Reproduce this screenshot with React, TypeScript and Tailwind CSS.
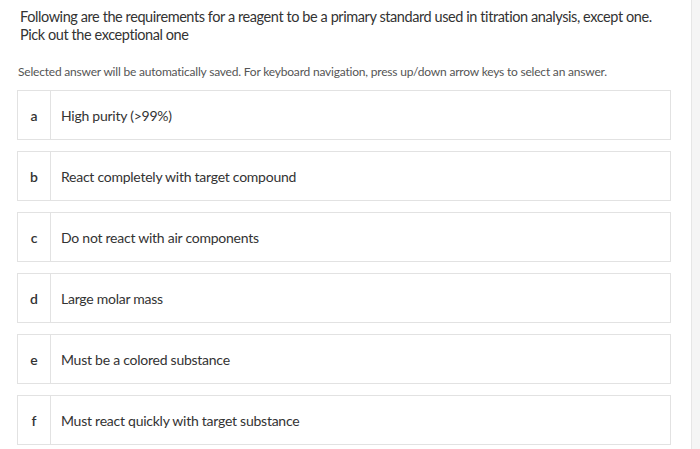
import React from "react";

const options = [
  ["a", "High purity (>99%)"],
  ["b", "React completely with target compound"],
  ["c", "Do not react with air components"],
  ["d", "Large molar mass"],
  ["e", "Must be a colored substance"],
  ["f", "Must react quickly with target substance"],
];

export default function App() {
  return (
    <div className="flex w-[700px] h-[449px] overflow-hidden bg-white" style={{ fontFamily: "Lato, 'Open Sans', sans-serif" }}>
      <div className="w-[692px] shrink-0 border-r border-[#e6e6e6] pl-[17px] pr-[20px]">
        <div className="pl-[3px] pt-[8px] text-[14.5px] leading-[18px] tracking-[-0.42px] text-[#333]">
          Following are the requirements for a reagent to be a primary standard used in titration analysis, except one.
          <br />
          Pick out the exceptional one
        </div>
        <div className="mt-[20px] pl-[1px] text-[12px] leading-[15px] tracking-[-0.2px] text-[#555]">
          Selected answer will be automatically saved. For keyboard navigation, press up/down arrow keys to select an answer.
        </div>
        <div className="mt-[11px] flex flex-col gap-[11px]">
          {options.map(([k, t]) => (
            <div key={k} className="flex h-[50px] border border-[#e2e2e2] bg-white">
              <div className="w-[33px] flex items-center justify-center border-r border-[#e2e2e2] text-[14px] text-[#333] font-semibold">
                {k}
              </div>
              <div className="flex items-center pl-[10px] text-[14px] tracking-[-0.25px] text-[#333]">{t}</div>
            </div>
          ))}
        </div>
      </div>
      <div className="flex-1 bg-[#f5f5f5]" />
    </div>
  );
}
